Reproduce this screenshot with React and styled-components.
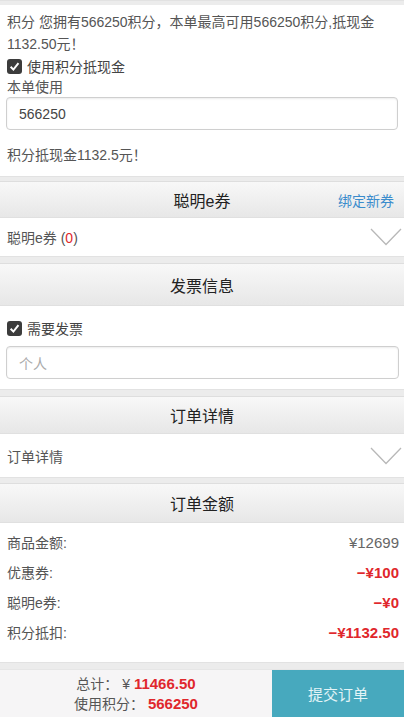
import styled, { createGlobalStyle } from 'styled-components';

const GlobalStyle = createGlobalStyle`
  html, body {
    margin: 0;
    padding: 0;
    background: #ebebeb;
    font-family: "Liberation Sans", "Noto Sans CJK SC", sans-serif;
    color: #444;
  }
  * { box-sizing: border-box; }
`;

const Page = styled.div`
  width: 404px;
  height: 717px;
  display: flex;
  flex-direction: column;
  overflow: hidden;
`;

const Band = styled.div`
  height: ${(p) => p.h || 7}px;
  flex: none;
  background: #ececec;
  border-top: 1px solid #e2e2e2;
`;

const WhiteBlock = styled.div`
  background: #fff;
  padding: ${(p) => p.pad || '0 7px'};
  flex: none;
`;

const Text = styled.div`
  font-size: 14px;
  line-height: 22px;
  color: #555;
`;

const CheckRow = styled.label`
  display: flex;
  align-items: center;
  gap: 5px;
  height: 22px;
  font-size: 14px;
  color: #444;
`;

const Box = styled.span`
  width: 15px;
  height: 15px;
  border-radius: 3px;
  background: #3c3c3c;
  display: inline-flex;
  align-items: center;
  justify-content: center;
`;

const Input = styled.div`
  height: 33px;
  border: 1px solid #cfcfcf;
  border-radius: 4px;
  box-shadow: inset 0 1px 2px rgba(0, 0, 0, 0.08);
  display: flex;
  align-items: center;
  padding: 0 12px;
  font-size: 14px;
  color: ${(p) => (p.placeholder ? '#aaa' : '#444')};
  margin: ${(p) => p.margin || '0'};
`;

const Header = styled.div`
  height: ${(p) => p.h || 40}px;
  flex: none;
  position: relative;
  display: flex;
  align-items: center;
  justify-content: center;
  background: linear-gradient(#f8f8f8, #e7e7e7);
  border-top: 1px solid #dedede;
  border-bottom: 1px solid #e0e0e0;
  font-size: 16px;
  color: #222;
`;

const HeaderLink = styled.span`
  position: absolute;
  right: 10px;
  top: 50%;
  transform: translateY(-50%);
  font-size: 14px;
  color: #3b8ccc;
`;

const FoldRow = styled.div`
  height: ${(p) => p.h || 38}px;
  flex: none;
  background: #fff;
  display: flex;
  align-items: center;
  justify-content: space-between;
  padding: 0 2px 0 7px;
  font-size: 14px;
  color: #555;
`;

const Red = styled.span`
  color: #e0272c;
  font-weight: ${(p) => (p.bold ? 700 : 400)};
`;

const AmountList = styled.div`
  background: #fff;
  flex: none;
  padding: 4px 5px 15px 7px;
  display: flex;
  flex-direction: column;
`;

const AmountRow = styled.div`
  height: 30px;
  display: flex;
  align-items: center;
  justify-content: space-between;
  font-size: 14px;
  color: #555;
`;

const Value = styled.span`
  font-size: 15px;
  color: ${(p) => (p.red ? '#e0272c' : '#666')};
  font-weight: ${(p) => (p.red ? 600 : 400)};
`;

const Footer = styled.div`
  flex: 1;
  display: flex;
  border-top: 1px solid #e6e6e6;
`;

const Totals = styled.div`
  flex: 1;
  background: #f6f5f6;
  display: flex;
  flex-direction: column;
  align-items: center;
  justify-content: center;
  font-size: 14px;
  line-height: 20px;
  color: #555;
`;

const Submit = styled.button`
  width: 132px;
  border: 0;
  background: #47a9be;
  color: #e3f4f7;
  font-size: 15px;
  font-family: inherit;
`;

const Chevron = () => (
  <svg width="32" height="18" viewBox="0 0 32 18">
    <polyline points="1,1 16,16.5 31,1" fill="none" stroke="#b8b8b8" strokeWidth="1.3" />
  </svg>
);

const Check = ({ children }) => (
  <CheckRow>
    <Box>
      <svg width="11" height="11" viewBox="0 0 10 10">
        <polyline points="1.5,5.2 4,7.8 8.6,2" fill="none" stroke="#fff" strokeWidth="1.8" />
      </svg>
    </Box>
    {children}
  </CheckRow>
);

export default function App() {
  return (
    <Page>
      <GlobalStyle />
      <Band h={5} />
      <WhiteBlock pad="6px 7px 10px">
        <Text>积分 您拥有566250积分，本单最高可用566250积分,抵现金1132.50元！</Text>
        <Check>使用积分抵现金</Check>
        <Text style={{ lineHeight: '20px' }}>本单使用</Text>
        <Input margin="0 -1px 14px">566250</Input>
        <Text>积分抵现金1132.5元！</Text>
      </WhiteBlock>
      <Band h={5} />
      <Header h={37}>
        聪明e券
        <HeaderLink>绑定新券</HeaderLink>
      </Header>
      <FoldRow>
        <span>
          聪明e券 (<Red>0</Red>)
        </span>
        <Chevron />
      </FoldRow>
      <Band h={7} />
      <Header h={43}>发票信息</Header>
      <WhiteBlock pad="11px 6px 10px 7px">
        <Check>需要发票</Check>
        <Input placeholder="1" margin="7px -1px 0 -1px">
          个人
        </Input>
      </WhiteBlock>
      <Band h={7} />
      <Header h={38}>订单详情</Header>
      <FoldRow h={43}>
        <span>订单详情</span>
        <Chevron />
      </FoldRow>
      <Band h={6} />
      <Header h={40}>订单金额</Header>
      <AmountList>
        <AmountRow>
          <span>商品金额:</span>
          <Value>¥12699</Value>
        </AmountRow>
        <AmountRow>
          <span>优惠券:</span>
          <Value red>−¥100</Value>
        </AmountRow>
        <AmountRow>
          <span>聪明e券:</span>
          <Value red>−¥0</Value>
        </AmountRow>
        <AmountRow>
          <span>积分抵扣:</span>
          <Value red>−¥1132.50</Value>
        </AmountRow>
      </AmountList>
      <Band h={7} />
      <Footer>
        <Totals>
          <div>
            总计：&nbsp;¥ <Red bold style={{ fontSize: 15 }}>11466.50</Red>
          </div>
          <div>
            使用积分：&nbsp;<Red bold style={{ fontSize: 15 }}>566250</Red>
          </div>
        </Totals>
        <Submit>提交订单</Submit>
      </Footer>
    </Page>
  );
}
